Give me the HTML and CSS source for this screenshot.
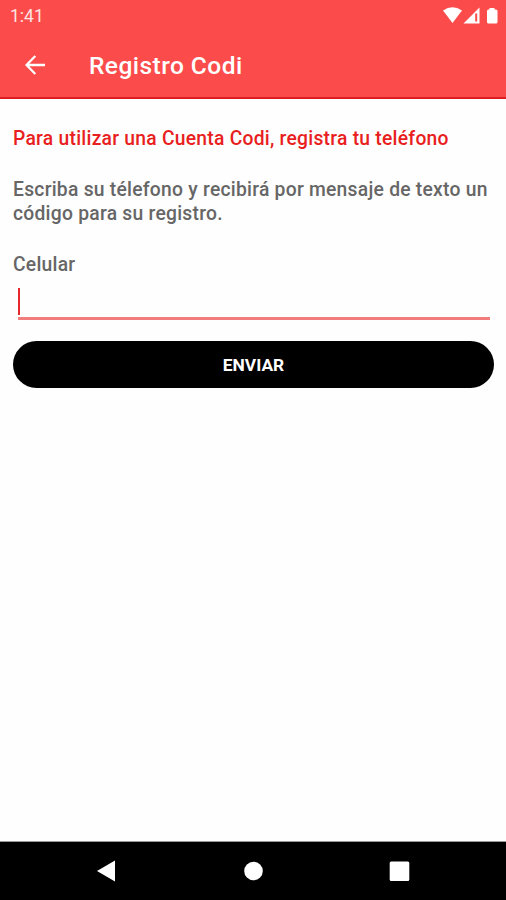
FILE: index.html
```html
<!DOCTYPE html>
<html lang="es">
<head>
  <meta charset="UTF-8">
  <meta name="viewport" content="width=device-width, initial-scale=1.0">
  <title>Registro Codi</title>
  <link rel="stylesheet" href="styles.css">
</head>
<body>
  <div class="screen">
    <header class="header">
      <div class="status">
        <span class="time">1:41</span>
        <svg class="status-icons" width="56" height="18" viewBox="0 0 56 18">
          <path d="M0 3.6 Q9.5 -3 19 3.6 L9.5 16 Z" />
          <path d="M20.5 16.5 L36.5 0.5 V16.5 Z" />
          <path class="signal-gap" d="M33.2 6.5 V14.5" />
          <path d="M46.5 2.5 V1 H51.5 V2.5 H53 Q54.5 2.5 54.5 4 V15 Q54.5 16.5 53 16.5 H45.5 Q44 16.5 44 15 V4 Q44 2.5 45.5 2.5 Z" />
        </svg>
      </div>
      <div class="toolbar">
        <svg class="back" width="20" height="20" viewBox="0 0 20 20">
          <path d="M20 10 H1.5 M10.3 1 L1.5 10 L10.3 19" />
        </svg>
        <h1 class="title">Registro Codi</h1>
      </div>
    </header>

    <main class="content">
      <p class="lead">Para utilizar una Cuenta Codi, registra tu teléfono</p>
      <p class="text">Escriba su télefono y recibirá por mensaje de texto un código para su registro.</p>
      <p class="label">Celular</p>
      <div class="field">
        <div class="cursor"></div>
      </div>
      <button class="send">ENVIAR</button>
    </main>

    <nav class="navbar">
      <svg width="22" height="22" viewBox="0 0 22 22"><path d="M2 11 L20 0.5 V21.5 Z" /></svg>
      <svg width="22" height="22" viewBox="0 0 22 22"><circle cx="11.5" cy="11" r="9.3" /></svg>
      <svg width="22" height="22" viewBox="0 0 22 22"><rect x="0.7" y="1.5" width="19.6" height="19.6" rx="1.5" /></svg>
    </nav>
  </div>
</body>
</html>
```
FILE: styles.css
```css
* {
  box-sizing: border-box;
}
body {
  margin: 0;
  background: #fefefe;
  font-family: Roboto, "Liberation Sans", sans-serif;
}
h1, p {
  margin: 0;
}
.screen {
  display: flex;
  flex-direction: column;
  height: 900px;
}

.header {
  height: 99px;
  background: #fb4c4b;
  border-bottom: 2px solid #df1c1f;
  color: #fff;
}
.status {
  display: flex;
  justify-content: space-between;
  height: 32px;
  padding: 7px 7px 0 10px;
}
.time {
  font-size: 17.5px;
  line-height: 19px;
  color: #ffe3e1;
}
.status-icons {
  fill: #fff;
}
.signal-gap {
  fill: none;
  stroke: #fb4c4b;
  stroke-width: 2;
}
.toolbar {
  display: flex;
  align-items: center;
  height: 66px;
  padding-left: 25px;
}
.back {
  fill: none;
  stroke: #fff;
  stroke-width: 2.3;
}
.title {
  margin-left: 44px;
  font-size: 24.5px;
  font-weight: 500;
  letter-spacing: 0.45px;
}

.content {
  flex: 1;
  padding: 28px 12px 0 13px;
  font-size: 19.3px;
  font-weight: 500;
  line-height: 23.5px;
  letter-spacing: 0.25px;
  color: #666;
}
.lead {
  color: #e81e20;
}
.text {
  margin-top: 27.5px;
}
.label {
  margin-top: 27.5px;
}
.field {
  height: 44px;
  margin: 0 4px 0 5px;
  padding-top: 12px;
  border-bottom: 3px solid #f27d7d;
}
.cursor {
  width: 2px;
  height: 27px;
  background: #e5282b;
}
.send {
  display: block;
  width: 100%;
  height: 47px;
  margin-top: 21px;
  padding: 1px 0 0;
  border: 0;
  border-radius: 24px;
  background: #000;
  color: #fff;
  font-family: inherit;
  font-size: 17.4px;
  font-weight: 700;
}

.navbar {
  display: flex;
  align-items: center;
  justify-content: space-between;
  height: 59px;
  padding: 0 95px;
  border-top: 1px solid #999;
  background: #000;
  fill: #fff;
}
```
